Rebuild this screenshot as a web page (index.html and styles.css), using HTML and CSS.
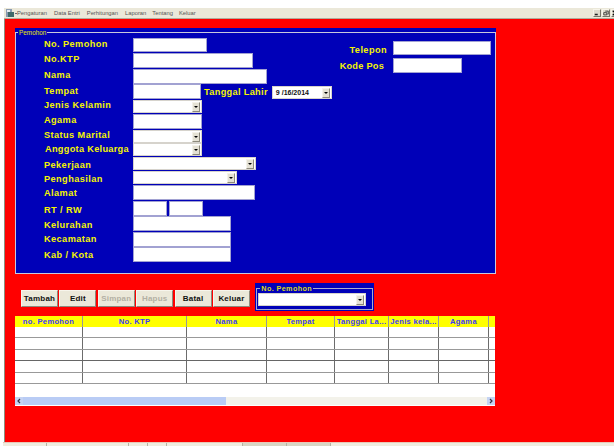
FILE: index.html
```html
<!DOCTYPE html>
<html lang="id">
<head>
<meta charset="utf-8">
<title>Data Pemohon</title>
<link rel="stylesheet" href="styles.css">
</head>
<body>
<div class="window">
  <nav class="menubar">
    <svg class="app-icon" width="11" height="9" viewBox="0 0 11 9"><rect x="0" y="0" width="6" height="8" fill="#8a9bb0"/><rect x="2" y="3" width="6" height="5" fill="#3f6a6a"/><rect x="1" y="1" width="3" height="2" fill="#e8ecef"/><rect x="9" y="4" width="2" height="1" fill="#667"/></svg>
    <span class="menu m1">Pengaturan</span>
    <span class="menu m2">Data Entri</span>
    <span class="menu m3">Perhitungan</span>
    <span class="menu m4">Laporan</span>
    <span class="menu m5">Tentang</span>
    <span class="menu m6">Keluar</span>
    <span class="winbtns">
      <span class="winbtn"><svg width="8" height="8" viewBox="0 0 8 8"><rect x="1" y="5" width="4" height="2" fill="#222"/></svg></span>
      <span class="winbtn"><svg width="8" height="8" viewBox="0 0 8 8"><path d="M3 1.5h4v4H6M1 3.5h4v3H1z" fill="none" stroke="#222"/></svg></span>
      <span class="winbtn"><svg width="8" height="8" viewBox="0 0 8 8"><path d="M1 1l6 6M7 1L1 7" stroke="#000" stroke-width="1.6"/></svg></span>
    </span>
  </nav>

  <main class="workspace">
    <section class="panel">
      <div class="frame">
        <span class="caption">Pemohon</span>
        <div class="form">
          <div class="col-main">
            <div class="row r1"><label>No. Pemohon</label><span class="box w74 h14"></span></div>
            <div class="row r2"><label>No.KTP</label><span class="box w120"></span></div>
            <div class="row r3"><label>Nama</label><span class="box w134"></span></div>
            <div class="row r4"><label class="off1">Tempat</label><span class="box w68"></span><label class="inline">Tanggal Lahir</label><span class="combo date"><span class="val">9 /16/2014</span><span class="arrow"></span></span></div>
            <div class="row r5"><label class="up1">Jenis Kelamin</label><span class="combo w69"><span class="arrow"></span></span></div>
            <div class="row r6"><label>Agama</label><span class="box w69"></span></div>
            <div class="row r7"><label class="up1">Status Marital</label><span class="combo w69"><span class="arrow"></span></span></div>
            <div class="row r8"><label class="nudge">Anggota Keluarga</label><span class="combo w69"><span class="arrow"></span></span></div>
            <div class="row r9"><label class="off2">Pekerjaan</label><span class="combo w123"><span class="arrow"></span></span></div>
            <div class="row r10"><label class="off2">Penghasilan</label><span class="combo w104"><span class="arrow"></span></span></div>
            <div class="row r11"><label class="off2">Alamat</label><span class="box w122"></span></div>
            <div class="row r12"><label class="off3">RT / RW</label><span class="box w34"></span><span class="box w34 gap2"></span></div>
            <div class="row r13"><label class="off3">Kelurahan</label><span class="box w98"></span></div>
            <div class="row r14"><label class="off1">Kecamatan</label><span class="box w98"></span></div>
            <div class="row r15"><label class="off2">Kab / Kota</label><span class="box w98"></span></div>
          </div>
          <div class="col-side">
            <div class="side-row s1"><label>Telepon</label><span class="box w98 h14"></span></div>
            <div class="side-row s2"><label>Kode Pos</label><span class="box w69"></span></div>
          </div>
        </div>
      </div>
    </section>

    <div class="actions">
      <button class="btn">Tambah</button>
      <button class="btn">Edit</button>
      <button class="btn off">Simpan</button>
      <button class="btn off">Hapus</button>
      <button class="btn">Batal</button>
      <button class="btn">Keluar</button>
      <section class="search">
        <div class="search-frame">
          <span class="caption big">No. Pemohon</span>
          <span class="combo w108"><span class="arrow"></span></span>
        </div>
      </section>
    </div>

    <div class="grid">
      <div class="grid-head">
        <span class="c1">no. Pemohon</span><span class="c2">No. KTP</span><span class="c3">Nama</span><span class="c4">Tempat</span><span class="c5">Tanggal La...</span><span class="c6">Jenis kela...</span><span class="c7">Agama</span><span class="c8"></span>
      </div>
      <div class="grid-row"><span class="c1"></span><span class="c2"></span><span class="c3"></span><span class="c4"></span><span class="c5"></span><span class="c6"></span><span class="c7"></span><span class="c8"></span></div>
      <div class="grid-row"><span class="c1"></span><span class="c2"></span><span class="c3"></span><span class="c4"></span><span class="c5"></span><span class="c6"></span><span class="c7"></span><span class="c8"></span></div>
      <div class="grid-row dark"><span class="c1"></span><span class="c2"></span><span class="c3"></span><span class="c4"></span><span class="c5"></span><span class="c6"></span><span class="c7"></span><span class="c8"></span></div>
      <div class="grid-row"><span class="c1"></span><span class="c2"></span><span class="c3"></span><span class="c4"></span><span class="c5"></span><span class="c6"></span><span class="c7"></span><span class="c8"></span></div>
      <div class="grid-row"><span class="c1"></span><span class="c2"></span><span class="c3"></span><span class="c4"></span><span class="c5"></span><span class="c6"></span><span class="c7"></span><span class="c8"></span></div>
      <div class="grid-blank"></div>
      <div class="scrollbar">
        <span class="sb-btn"><svg width="8" height="8" viewBox="0 0 8 8"><path d="M5 2L3 4l2 2" fill="none" stroke="#334" stroke-width="1.2"/></svg></span>
        <span class="sb-thumb"></span>
        <span class="sb-btn"><svg width="8" height="8" viewBox="0 0 8 8"><path d="M3 2l2 2-2 2" fill="none" stroke="#334" stroke-width="1.2"/></svg></span>
      </div>
    </div>
  </main>

  <footer class="statusbar">
    <span class="st s-a"></span><span class="st s-b"></span><span class="st s-c"></span><span class="st s-d"></span><span class="st s-e"></span><span class="st s-f"></span><span class="st s-g"></span><span class="st s-h"></span>
  </footer>
</div>
</body>
</html>
```

FILE: styles.css
```css
* { box-sizing: border-box; }
html, body { margin: 0; padding: 0; background: #fff; }
body { width: 614px; height: 446px; overflow: hidden; font-family: "Liberation Sans", Arial, sans-serif; }

.window { padding: 8px 0 0 4px; height: 446px; display: flex; flex-direction: column; }

/* menu strip */
.menubar { height: 11px; background: #ebe8d9; display: flex; align-items: center; font-size: 5.8px; color: #555; flex: none; border-bottom: 1px solid #b0ac9c; }
.app-icon { margin-left: 2px; width: 11px; height: 9px; }
.menu { white-space: nowrap; }
.m1 { margin-left: 0; }
.m2 { margin-left: 7px; }
.m3 { margin-left: 7px; }
.m4 { margin-left: 7px; }
.m5 { margin-left: 6px; }
.m6 { margin-left: 6px; }
.winbtns { margin-left: auto; margin-right: -5px; display: flex; gap: 1px; flex: none; }
.winbtn { width: 8px; height: 8px; background: #dedbcc; border: 1px solid; border-color: #f6f4ea #77756a #77756a #f6f4ea; display: flex; overflow: hidden; flex: none; }
.winbtn svg { width: 6px; height: 6px; }

/* red client area */
.workspace { flex: 1; background: #f00; border-left: 1px solid #8e8b7e; padding: 9px 0 0 10px; min-height: 0; }

/* blue group boxes */
.panel { width: 481px; height: 246px; background: #0000b8; padding-top: 4px; }
.frame { height: 100%; border: 1px solid #c8c8dc; position: relative; padding-top: 5px; }
.caption { position: absolute; left: 2px; top: -3px; background: #0000b8; color: #e8e800; font-size: 6.4px; line-height: 6px; padding: 0 1px; white-space: nowrap; }
.caption.big { top: -4px; left: 3px; font-size: 7.2px; line-height: 8px; font-weight: 700; letter-spacing: .4px; color: #d8d820; }

.form { display: flex; }
.col-main { width: 320px; padding-left: 28px; flex: none; }
.col-side { flex: 1; padding-top: 3px; }

.row { display: flex; align-items: flex-start; }
.r1 { height: 15px; } .r2 { height: 16px; } .r3 { height: 15px; } .r4 { height: 16px; }
.r5 { height: 14px; } .r6 { height: 16px; } .r7 { height: 13px; } .r8 { height: 14px; }
.r9 { height: 14px; } .r10 { height: 14px; } .r11 { height: 16px; } .r12 { height: 15px; }
.r13 { height: 16px; } .r14 { height: 15px; } .r15 { height: 16px; }

label { color: #f4f400; font-size: 9.2px; line-height: 12px; font-weight: 700; letter-spacing: .42px; white-space: nowrap; }
.row > label:first-child { width: 89px; flex: none; }
.row > label.nudge { padding-left: 1px; letter-spacing: .3px; }
.up1 { margin-top: -1px; }
.off1 { margin-top: 1px; }
.off2 { margin-top: 2px; }
.off3 { margin-top: 3px; }
.inline { margin: 2px 4px 0 3px; letter-spacing: .33px; flex: none; }

.box { display: block; height: 15px; background: #fff; border: 1px solid #a2a2d2; flex: none; }
.h14 { height: 14px; }
.combo { display: flex; height: 13px; background: #fff; border: 1px solid #d6d3cc; flex: none; justify-content: flex-end; align-items: center; padding-right: 1px; }
.arrow { width: 8px; height: 10px; background: #e4e1d4; border: 1px solid; border-color: #f4f2ea #8d8a7d #8d8a7d #f4f2ea; position: relative; display: block; flex: none; }
.arrow::after { content: ""; position: absolute; left: 1px; top: 3px; border: 2px solid transparent; border-top: 2px solid #000; border-bottom: 0; }

.w34 { width: 34px; } .w68 { width: 68px; } .w69 { width: 69px; } .w74 { width: 74px; } .w98 { width: 98px; }
.w104 { width: 104px; } .w108 { width: 108px; } .w120 { width: 120px; } .w122 { width: 122px; }
.w123 { width: 123px; } .w134 { width: 134px; } .gap2 { margin-left: 2px; }

.date { width: 60px; height: 13px; margin-top: 2px; justify-content: space-between; font-size: 7px; font-weight: 700; color: #111; padding-left: 3px; white-space: nowrap; }

.side-row { display: flex; align-items: flex-start; height: 17px; }
.side-row label { width: 51px; text-align: right; flex: none; margin-right: 6px; margin-top: 3px; }
.s2 label { margin-right: 9px; width: 48px; margin-top: 2px; letter-spacing: .25px; }

/* button strip with the lookup box */
.actions { display: flex; align-items: flex-start; margin-top: 9px; padding-left: 6px; height: 33px; }
.btn { width: 37px; height: 17px; margin: 7px 1.4px 0 0; padding: 0; background: #ebe8d9; border: 1px solid; border-color: #f7f5ec #8d8a7d #8d8a7d #f7f5ec; font: 700 8px "Liberation Sans", Arial, sans-serif; letter-spacing: .2px; color: #111; flex: none; }
.btn.off { color: #b3b0a4; }
.search { width: 119px; height: 28px; margin-left: 4px; background: #0000b8; padding: 5px 1px 1px; }
.search-frame { height: 100%; border: 1px solid #a9a9cc; position: relative; padding: 4px 0 0 1px; }

/* data table */
.grid { width: 480px; height: 90px; background: #fff; }
.grid-head, .grid-row { display: flex; }
.grid-head { height: 11px; background: #ffff00; color: #3a3aff; font-size: 7.6px; font-weight: 700; line-height: 11px; text-align: center; letter-spacing: .3px; }
.grid-head span { border-right: 1px solid #999; white-space: nowrap; overflow: hidden; flex: none; }
.grid-row { height: 11.4px; border-bottom: 1px solid #999; }
.grid-row.dark { border-bottom-color: #666; }
.grid-row span { border-right: 1px solid #6c6c6c; flex: none; }
.grid-head .c8, .grid-row .c8 { border-right: 0; }
.c1 { width: 68px; } .c2 { width: 104px; } .c3 { width: 80px; } .c4 { width: 68px; }
.c5 { width: 54px; } .c6 { width: 50px; } .c7 { width: 50px; } .c8 { width: 6px; }
.grid-blank { height: 13px; }
.scrollbar { height: 8px; background: #f3f2ea; display: flex; justify-content: space-between; position: relative; }
.sb-btn { width: 8px; height: 8px; background: #c4d3f3; flex: none; display: block; }
.sb-btn svg { display: block; }
.sb-thumb { position: absolute; left: 8px; top: 0; width: 203px; height: 8px; background: #b9ccf5; }

/* status strip along the bottom edge */
.statusbar { height: 4px; flex: none; background: #efecdf; border-top: 1px solid #e8c8b8; display: flex; margin-left: -1px; }
.st { border-right: 1px solid #b5b2a4; flex: none; }
.s-a { width: 44px; } .s-b { width: 82px; } .s-c { width: 19px; } .s-d { width: 19px; } .s-e { width: 76px; }
.s-f { width: 44px; background: #d8d5c4; } .s-g { width: 44px; background: #d8d5c4; } .s-h { flex: 1; border: 0; }
```
